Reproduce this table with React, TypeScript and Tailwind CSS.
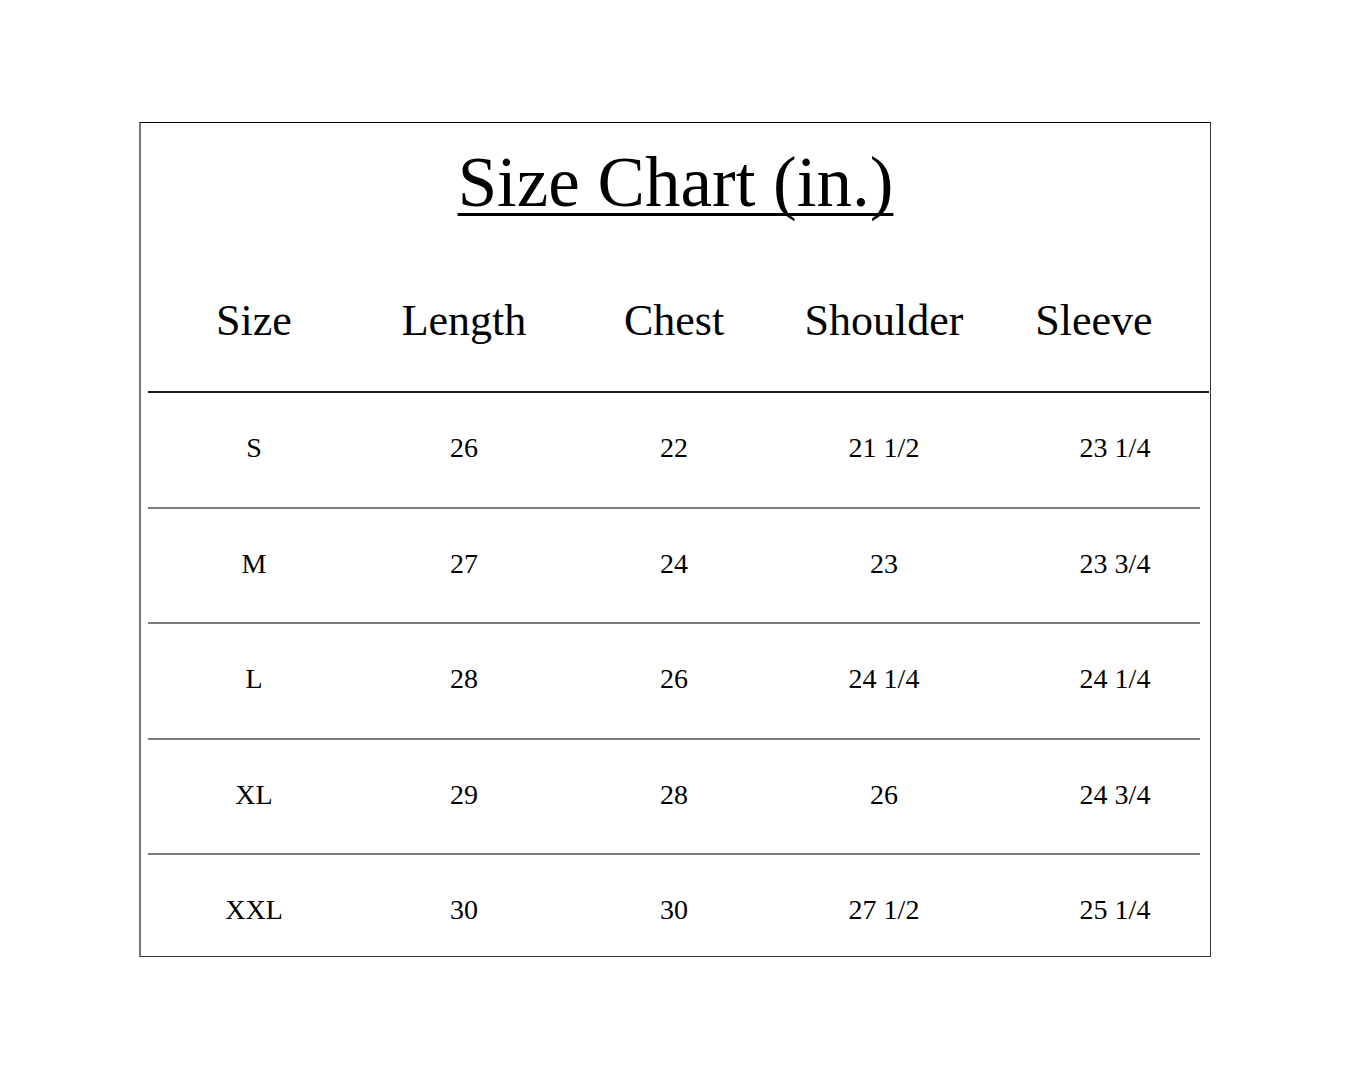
const headers = ["Size", "Length", "Chest", "Shoulder", "Sleeve"];
const rows = [
  ["S", "26", "22", "21 1/2", "23 1/4"],
  ["M", "27", "24", "23", "23 3/4"],
  ["L", "28", "26", "24 1/4", "24 1/4"],
  ["XL", "29", "28", "26", "24 3/4"],
  ["XXL", "30", "30", "27 1/2", "25 1/4"],
];

export default function App() {
  return (
    <div className="min-h-[1080px] w-[1350px] bg-white pt-[122px] pl-[139px] text-black font-['Liberation_Serif','Times_New_Roman',serif]">
      <div className="w-[1072px] h-[835px] overflow-hidden border-t border-t-black border-l-2 border-l-[#777] border-r border-r-[#333] border-b border-b-[#333]">
        <div className="mt-[23px] h-[72px] text-center text-[71px] leading-[72px]">
          <span className="underline decoration-[3px] underline-offset-[7px] [text-decoration-skip-ink:none]">Size Chart (in.)</span>
        </div>
        <div className="mt-[81px] pl-[8px] grid grid-cols-[repeat(5,210px)] h-[44px] text-[44px] leading-[44px]">
          {headers.map((h) => (
            <div key={h} className="text-center whitespace-nowrap">{h}</div>
          ))}
        </div>
        <div className="mt-[48px] ml-[7px] w-[1061px] h-[2px] bg-[#1a1a1a]" />
        {rows.map((r, i) => (
          <div key={r[0]}>
            <div className="h-[113.5px] pt-[41px] pl-[8px] grid grid-cols-[repeat(5,210px)] content-start text-[28px] leading-[28px]">
              {r.map((c, j) => (
                <div key={j} className={j === 4 ? "text-center whitespace-nowrap pl-[42px]" : "text-center whitespace-nowrap"}>
                  {c}
                </div>
              ))}
            </div>
            {i < rows.length - 1 && <div className="ml-[7px] w-[1052px] h-[2px] bg-[#7a7a7a]" />}
          </div>
        ))}
      </div>
    </div>
  );
}
